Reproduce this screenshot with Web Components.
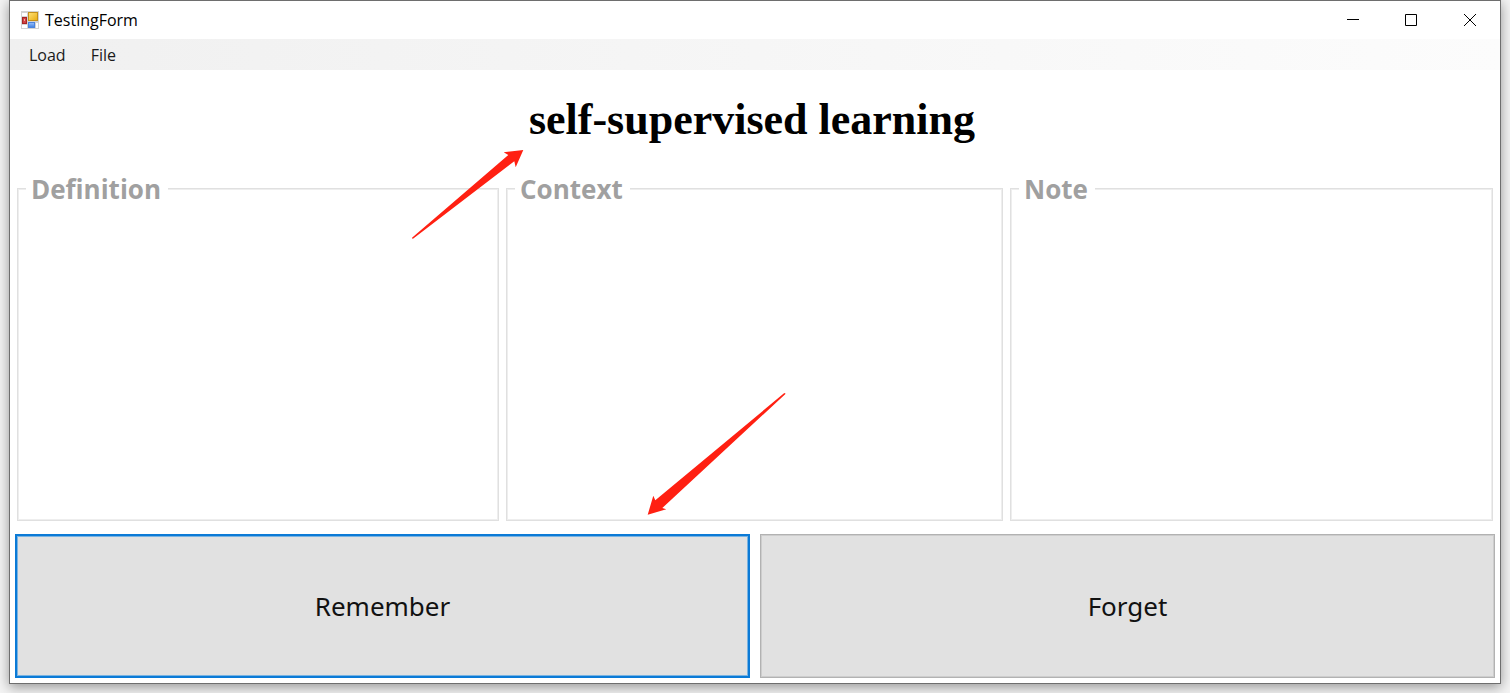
<!DOCTYPE html>
<html lang="en">
<head>
<meta charset="utf-8">
<title>TestingForm</title>
<style>
html, body { margin: 0; }
body { background: #f4f4f4; font-family: "Open Sans", "Noto Sans", sans-serif; color: #000; }
</style>
</head>
<body>
<testing-form></testing-form>
<script>
function define(name, html) {
  const template = document.createElement('template');
  template.innerHTML = html;
  customElements.define(name, class extends HTMLElement {
    constructor() {
      super();
      this.attachShadow({ mode: 'open' }).append(template.content.cloneNode(true));
    }
  });
}

define('title-bar', `
<style>
:host { display: flex; align-items: center; height: 38px; background: #fff; }
.icon { margin-left: 11px; }
.name { flex: 1; margin-left: 6px; font: 16px/22px "Open Sans", sans-serif; }
button { width: 58px; height: 38px; padding: 0; border: 0; background: none; display: grid; place-items: center; }
button:last-child { width: 60px; }
</style>
<svg class="icon" width="18" height="18" viewBox="0 0 18 18" aria-hidden="true">
  <defs>
    <linearGradient id="y" x2="1" y2="1"><stop stop-color="#ffe27a"/><stop offset="1" stop-color="#e8ac10"/></linearGradient>
    <linearGradient id="b" x2="0" y2="1"><stop stop-color="#9cc2fa"/><stop offset="1" stop-color="#3d7de0"/></linearGradient>
  </defs>
  <rect width="18" height="18" fill="#d3d3d3"/>
  <path d="M1 2h5v3H1zM1 14h5v3H1zM15 12h2v5h-2z" fill="#fff"/>
  <rect x="1" y="6" width="5" height="7" fill="#a82424"/>
  <rect x="2" y="7" width="3" height="5" fill="#cf4242"/>
  <rect x="3" y="8" width="1" height="2" fill="#f5a49c"/>
  <rect x="7.500" y="1.500" width="9" height="8" fill="url(#y)" stroke="#c4901b"/>
  <rect x="7.500" y="11.500" width="6" height="5" fill="url(#b)" stroke="#4b84dc"/>
</svg>
<span class="name"><slot></slot></span>
<button aria-label="Minimize"><svg width="12" height="12"><path d="M0 5.500h12" stroke="#000"/></svg></button>
<button aria-label="Maximize"><svg width="12" height="12"><path d="M.5.500h11v11H.5z" fill="none" stroke="#000"/></svg></button>
<button aria-label="Close"><svg width="12" height="12"><path d="M0 0l12 12M12 0L0 12" stroke="#000"/></svg></button>
`);

define('menu-strip', `
<style>
:host { display: flex; align-items: center; height: 31px; padding-left: 12px; background: linear-gradient(90deg, #f0f0f0, #fcfcfc); }
</style>
<slot></slot>
`);

define('menu-entry', `
<style>
button { padding: 0 7px; margin-right: 11px; border: 0; background: none; color: #1a1a1a; font: 16px/24px "Open Sans", sans-serif; }
</style>
<button><slot></slot></button>
`);

define('group-box', `
<style>
:host { display: flex; min-width: 0; }
fieldset { flex: 1; min-width: 0; margin: 0; padding: 0 8px; border: 1px solid #e0e0e0; box-shadow: inset 0 0 0 1px #eee; }
legend { padding: 2px 7px 0 5px; background: #fff; color: #a0a0a0; font-size: 26px; line-height: 34px; font-weight: 700; }
</style>
<fieldset><legend><slot></slot></legend></fieldset>
`);

define('answer-button', `
<style>
:host { display: flex; }
button { flex: 1; height: 144px; padding: 0; border: 1px solid #b2b2b2; box-shadow: inset 0 0 0 1px #cdcdcd; background: #e1e1e1; color: #111; font: 26px/36px "Noto Sans", sans-serif; }
:host([focused]) button { border: 2px solid #0b7ad6; box-shadow: inset 0 0 0 1px #78b3e2; }
</style>
<button><slot></slot></button>
`);

define('pointer-arrow', `
<style>
:host { position: absolute; pointer-events: none; }
</style>
<slot></slot>
`);

define('testing-form', `
<style>
:host { display: flex; min-height: 100vh; box-sizing: border-box; padding: 0 9px 9px; overflow: hidden; }
.window { position: relative; flex: 1; display: flex; flex-direction: column; background: #fff; border: 1px solid #6e6e6e; box-shadow: 0 3px 12px rgba(0, 0, 0, .4); }
h1 { margin: 20px 0 0; padding-right: 6px; text-align: center; font: 700 44px/60px "Palatino Linotype", Palatino, "Liberation Serif", serif; }
.groups { flex: 1; display: grid; grid-template-columns: 482fr 497fr 483fr; gap: 7px; margin: 20px 7px 0; }
.answers { display: grid; grid-template-columns: 1fr 1fr; gap: 10px; padding: 13px 5px 5px; }
svg { display: block; fill: #ff2012; }
.to-word { left: 402px; top: 149px; }
.to-answer { left: 637px; top: 392px; }
</style>
<div class="window">
  <title-bar>TestingForm</title-bar>
  <menu-strip><menu-entry>Load</menu-entry><menu-entry>File</menu-entry></menu-strip>
  <h1>self-supervised learning</h1>
  <div class="groups">
    <group-box>Definition</group-box>
    <group-box>Context</group-box>
    <group-box>Note</group-box>
  </div>
  <div class="answers">
    <answer-button focused>Remember</answer-button>
    <answer-button>Forget</answer-button>
  </div>
  <pointer-arrow class="to-word">
    <svg width="112" height="90" aria-hidden="true"><path d="M111.300 0L91.700 2.300L96.300 5L0 87.700L.7 89L102.300 11.300L103.700 17.300Z"/></svg>
  </pointer-arrow>
  <pointer-arrow class="to-answer">
    <svg width="140" height="124" aria-hidden="true"><path d="M.7 121.700L6.300 102.700L8.300 107.300L137.300 0L138.700.7L15.300 115L19.300 116.300Z"/></svg>
  </pointer-arrow>
</div>
`);
</script>
</body>
</html>
